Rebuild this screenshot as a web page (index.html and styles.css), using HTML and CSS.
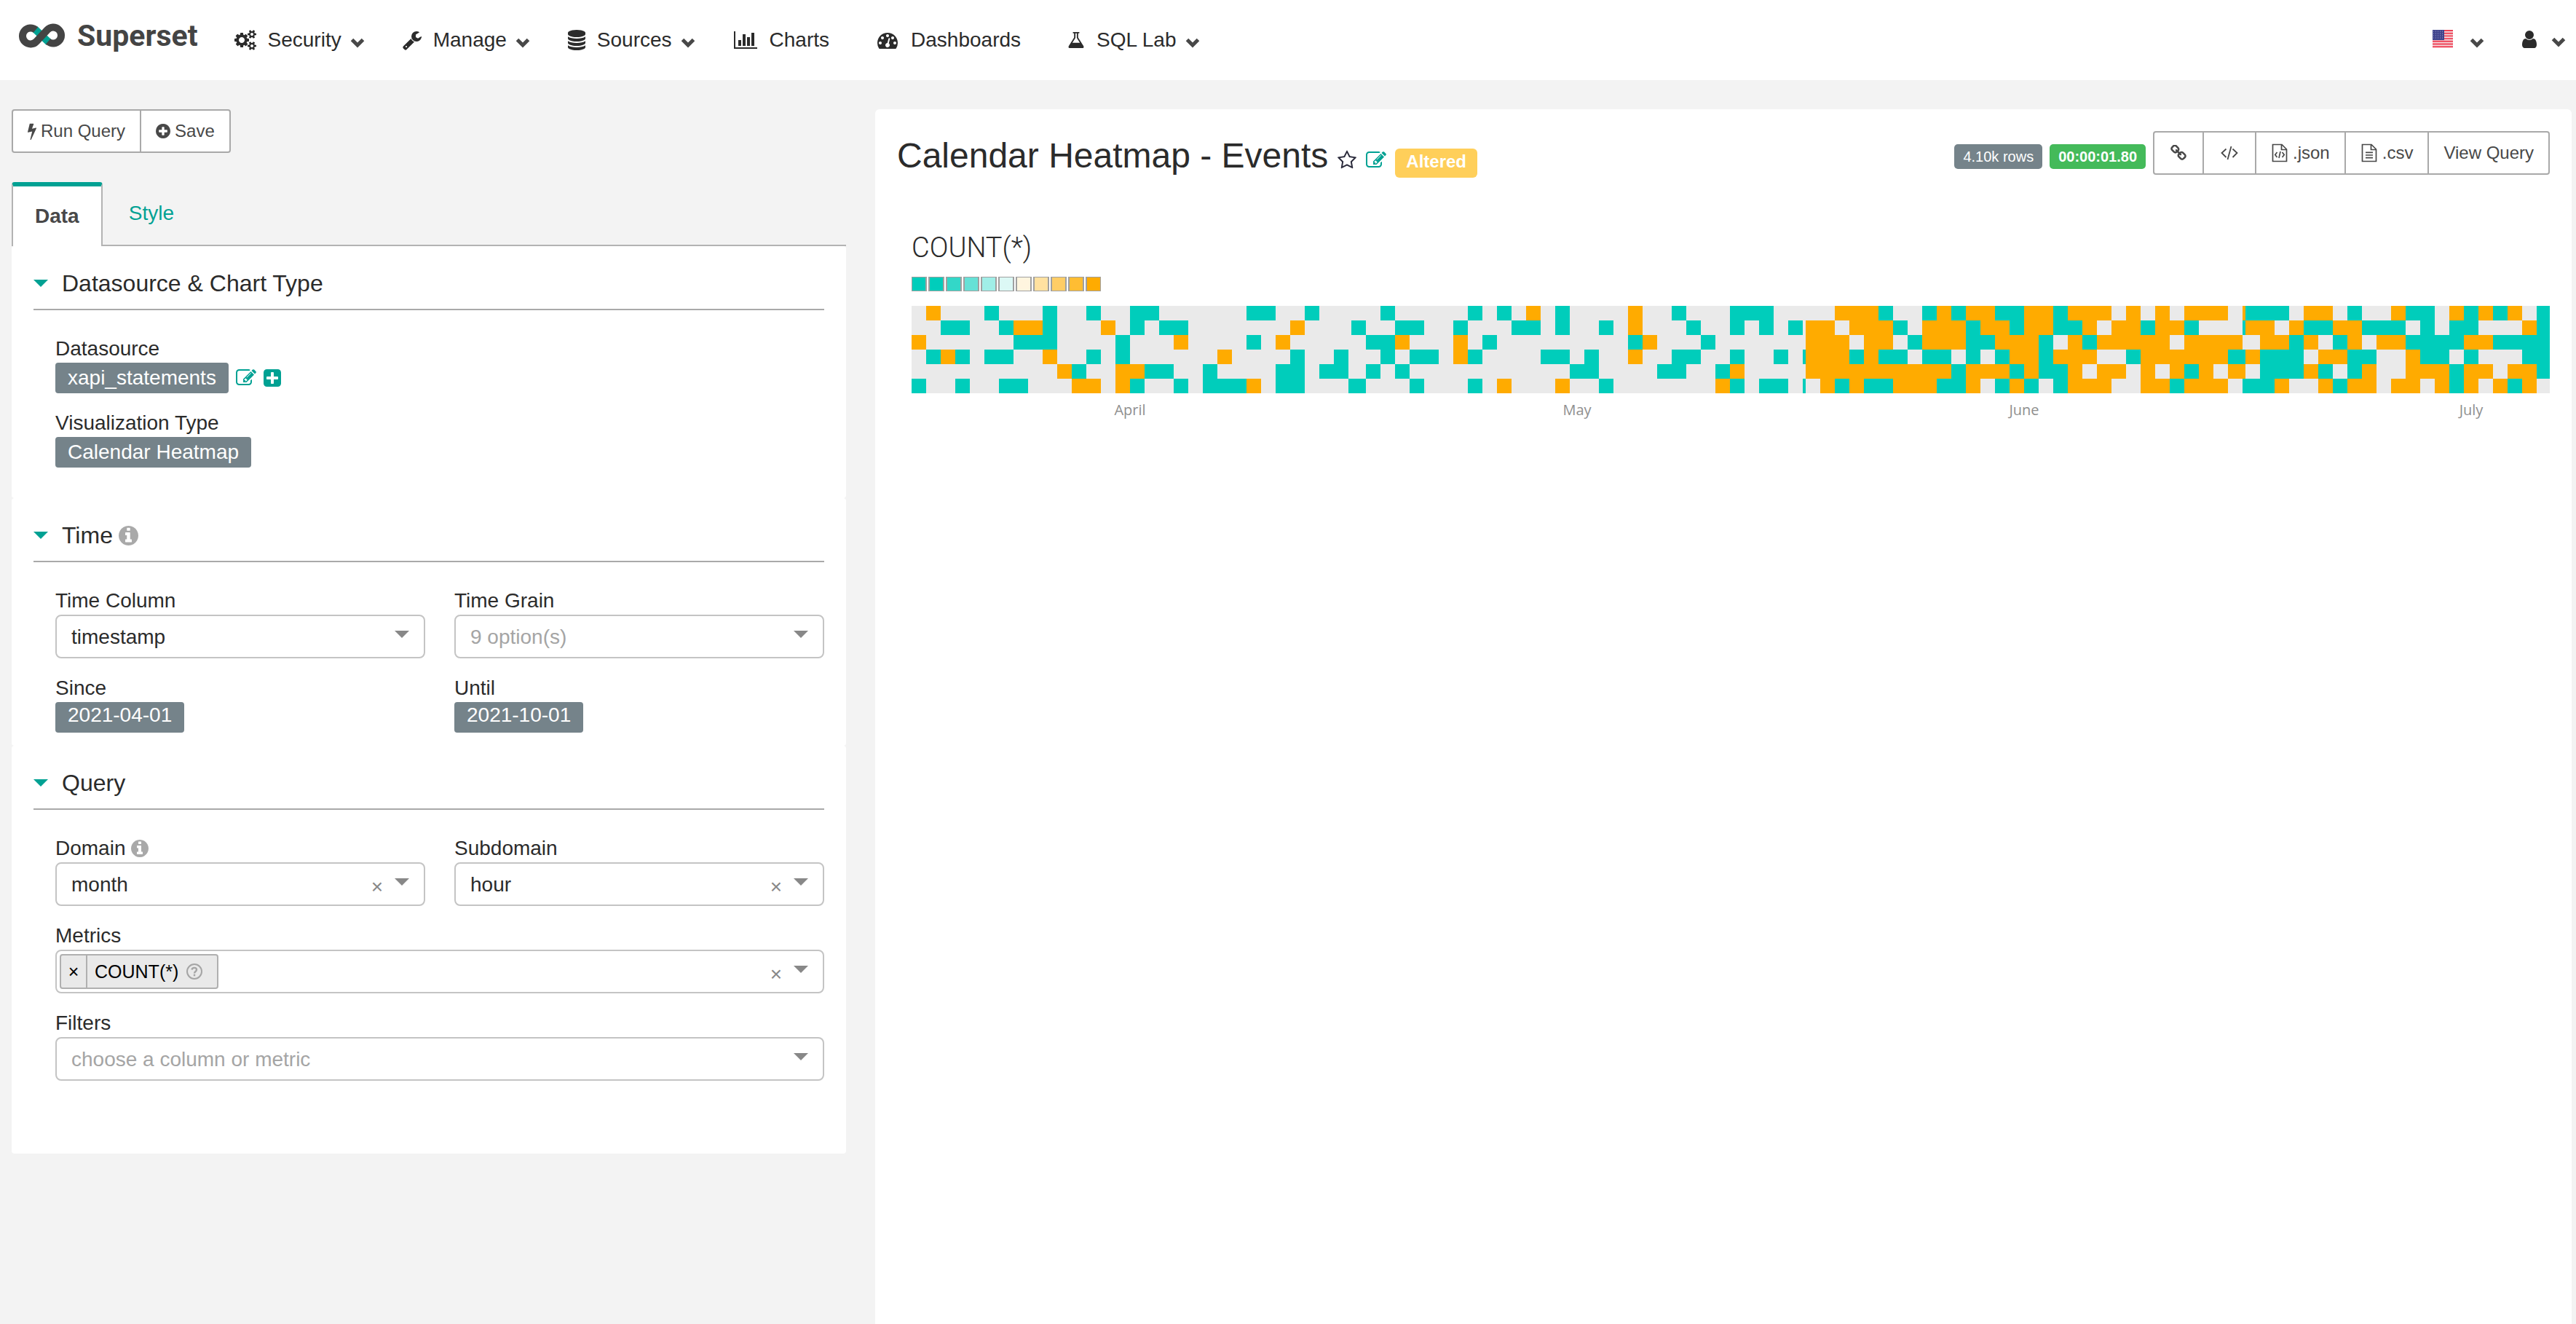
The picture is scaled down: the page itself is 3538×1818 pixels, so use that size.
FILE: index.html
```html
<!DOCTYPE html>
<html lang="en">
<head>
<meta charset="utf-8">
<meta name="viewport" content="width=device-width, initial-scale=1">
<title>Calendar Heatmap - Events</title>
<link rel="stylesheet" href="styles.css">
</head>
<body>
<svg class="sprite" aria-hidden="true">
  <symbol id="i-cogs" viewBox="0 0 1920 1792"><path d="M896 896q0-106-75-181t-181-75-181 75-75 181 75 181 181 75 181-75 75-181zm768 512q0-52-38-90t-90-38-90 38-38 90q0 53 37.5 90.5t90.5 37.5 90.5-37.5 37.5-90.5zm0-1024q0-52-38-90t-90-38-90 38-38 90q0 53 37.5 90.5t90.5 37.5 90.5-37.5 37.5-90.5zm-384 421v185q0 10-7 19.5t-16 10.5l-155 24q-11 35-32 76 34 48 90 115 7 11 7 20 0 12-7 19-23 30-82.5 89.5t-78.5 59.5q-11 0-21-7l-115-90q-37 19-77 31-11 108-23 155-7 24-30 24h-186q-11 0-20-7.5t-10-17.5l-23-153q-34-10-75-31l-118 89q-7 7-20 7-11 0-21-8-144-133-144-160 0-9 7-19 10-14 41-53t47-61q-23-44-35-82l-152-24q-10-1-17-9.5t-7-19.5v-185q0-10 7-19.5t16-10.5l155-24q11-35 32-76-34-48-90-115-7-11-7-20 0-12 7-20 22-30 82-89t79-59q11 0 21 7l115 90q34-18 77-32 11-108 23-154 7-24 30-24h186q11 0 20 7.5t10 17.5l23 153q34 10 75 31l118-89q8-7 20-7 11 0 21 8 144 133 144 160 0 8-7 19-12 16-42 54t-45 60q23 48 34 82l152 23q10 2 17 10.5t7 19.5zm640 533v140q0 16-149 31-12 27-30 52 51 113 51 138 0 4-4 7-122 71-124 71-8 0-46-47t-52-68q-20 2-30 2t-30-2q-14 21-52 68t-46 47q-2 0-124-71-4-3-4-7 0-25 51-138-18-25-30-52-149-15-149-31v-140q0-16 149-31 13-29 30-52-51-113-51-138 0-4 4-7 4-2 35-20t59-34 30-16q8 0 46 46.5t52 67.5q20-2 30-2t30 2q51-71 92-112l6-2q4 0 124 70 4 3 4 7 0 25-51 138 17 23 30 52 149 15 149 31zm0-1024v140q0 16-149 31-12 27-30 52 51 113 51 138 0 4-4 7-122 71-124 71-8 0-46-47t-52-68q-20 2-30 2t-30-2q-14 21-52 68t-46 47q-2 0-124-71-4-3-4-7 0-25 51-138-18-25-30-52-149-15-149-31v-140q0-16 149-31 13-29 30-52-51-113-51-138 0-4 4-7 4-2 35-20t59-34 30-16q8 0 46 46.5t52 67.5q20-2 30-2t30 2q51-71 92-112l6-2q4 0 124 70 4 3 4 7 0 25-51 138 17 23 30 52 149 15 149 31z"/></symbol>
  <symbol id="i-wrench" viewBox="64 0 1664 1792"><path d="M448 1472q0-26-19-45t-45-19-45 19-19 45 19 45 45 19 45-19 19-45zm644-420l-682 682q-37 37-90 37-52 0-91-37l-106-108q-38-36-38-90 0-53 38-91l681-681q39 98 114.5 173.5t173.5 114.5zm634-435q0 39-23 106-47 134-164.5 217.5t-258.5 83.5q-185 0-316.5-131.5t-131.5-316.5 131.5-316.5 316.5-131.5q58 0 121.5 16.5t107.5 46.5q16 11 16 28t-16 28l-293 169v224l193 107q5-3 79-48.5t135.5-81 70.5-35.5q15 0 23.5 10t8.5 25z"/></symbol>
  <symbol id="i-database" viewBox="128 0 1536 1792"><path d="M896 768q237 0 443-43t325-127v170q0 69-103 128t-280 93.5-385 34.5-385-34.5-280-93.5-103-128v-170q119 84 325 127t443 43zm0 768q237 0 443-43t325-127v170q0 69-103 128t-280 93.5-385 34.5-385-34.5-280-93.5-103-128v-170q119 84 325 127t443 43zm0-384q237 0 443-43t325-127v170q0 69-103 128t-280 93.5-385 34.5-385-34.5-280-93.5-103-128v-170q119 84 325 127t443 43zm0-1152q208 0 385 34.5t280 93.5 103 128v128q0 69-103 128t-280 93.5-385 34.5-385-34.5-280-93.5-103-128v-128q0-69 103-128t280-93.5 385-34.5z"/></symbol>
  <symbol id="i-chart" viewBox="0 0 2048 1792"><path d="M640 896v512h-256v-512h256zm384-512v1024h-256v-1024h256zm1024 1152v128h-2048v-1536h128v1408h1920zm-640-896v768h-256v-768h256zm384-384v1152h-256v-1152h256z"/></symbol>
  <symbol id="i-dashboard" viewBox="0 0 1792 1792"><path d="M384 1152q0-53-37.5-90.5t-90.5-37.5-90.5 37.5-37.5 90.5 37.5 90.5 90.5 37.5 90.5-37.5 37.5-90.5zm192-448q0-53-37.5-90.5t-90.5-37.5-90.5 37.5-37.5 90.5 37.5 90.5 90.5 37.5 90.5-37.5 37.5-90.5zm428 481l101-382q6-26-7.5-48.5t-38.5-29.5-48 6.5-30 39.5l-101 382q-60 5-107 43.5t-63 98.5q-20 77 20 146t117 89 146-20 89-117q16-60-6-117t-72-91zm660-33q0-53-37.5-90.5t-90.5-37.5-90.5 37.5-37.5 90.5 37.5 90.5 90.5 37.5 90.5-37.5 37.5-90.5zm-640-640q0-53-37.5-90.5t-90.5-37.5-90.5 37.5-37.5 90.5 37.5 90.5 90.5 37.5 90.5-37.5 37.5-90.5zm448 192q0-53-37.5-90.5t-90.5-37.5-90.5 37.5-37.5 90.5 37.5 90.5 90.5 37.5 90.5-37.5 37.5-90.5zm320 448q0 261-141 483-19 29-54 29h-1402q-35 0-54-29-141-221-141-483 0-182 71-348t191-286 286-191 348-71 348 71 286 191 191 286 71 348z"/></symbol>
  <symbol id="i-flask" viewBox="64 0 1664 1792"><path d="M1591 1448q56 89 21.5 152.5t-140.5 63.5h-1152q-106 0-140.5-63.5t21.5-152.5l503-793v-399h-64q-26 0-45-19t-19-45 19-45 45-19h512q26 0 45 19t19 45-19 45-45 19h-64v399zm-779-725l-272 429h712l-272-429-20-31v-436h-128v436z"/></symbol>
  <symbol id="i-user" viewBox="256 0 1280 1792"><path d="M1536 1399q0 109-62.5 187t-150.5 78h-854q-88 0-150.5-78t-62.5-187q0-85 8.5-160.5t31.5-152 58.5-131 94-89 134.5-34.5q131 128 313 128t313-128q76 0 134.5 34.5t94 89 58.5 131 31.5 152 8.5 160.5zm-256-887q0 159-112.5 271.5t-271.5 112.5-271.5-112.5-112.5-271.5 112.5-271.5 271.5-112.5 271.5 112.5 112.5 271.5z"/></symbol>
  <symbol id="i-bolt" viewBox="448 0 896 1792"><path d="M1333 566q18 20 7 44l-540 1157q-13 25-42 25-4 0-14-2-17-5-25.5-19t-4.5-30l197-808-406 101q-4 1-12 1-18 0-31-11-18-15-13-39l201-825q4-14 16-23t28-9h328q19 0 32 12.5t13 29.5q0 8-5 18l-171 463 396-98q8-2 12-2 19 0 34 15z"/></symbol>
  <symbol id="i-plus-circle" viewBox="128 0 1536 1792"><path d="M1344 960v-128q0-26-19-45t-45-19h-256v-256q0-26-19-45t-45-19h-128q-26 0-45 19t-19 45v256h-256q-26 0-45 19t-19 45v128q0 26 19 45t45 19h256v256q0 26 19 45t45 19h128q26 0 45-19t19-45v-256h256q26 0 45-19t19-45zm320-64q0 209-103 385.5t-279.5 279.5-385.5 103-385.5-103-279.5-279.5-103-385.5 103-385.5 279.5-279.5 385.5-103 385.5 103 279.5 279.5 103 385.5z"/></symbol>
  <symbol id="i-plus-square" viewBox="128 0 1536 1792"><path d="M1408 960v-128q0-26-19-45t-45-19h-320v-320q0-26-19-45t-45-19h-128q-26 0-45 19t-19 45v320h-320q-26 0-45 19t-19 45v128q0 26 19 45t45 19h320v320q0 26 19 45t45 19h128q26 0 45-19t19-45v-320h320q26 0 45-19t19-45zm256-544v960q0 119-84.5 203.5t-203.5 84.5h-960q-119 0-203.5-84.5t-84.5-203.5v-960q0-119 84.5-203.5t203.5-84.5h960q119 0 203.5 84.5t84.5 203.5z"/></symbol>
  <symbol id="i-edit" viewBox="0 0 1792 1792"><path d="M888 1184l116-116-152-152-116 116v56h96v96h56zm440-720q-16-16-33 1l-350 350q-17 17-1 33t33-1l350-350q17-17 1-33zm80 594v190q0 119-84.5 203.5t-203.5 84.5h-832q-119 0-203.5-84.5t-84.5-203.5v-832q0-119 84.5-203.5t203.5-84.5h832q63 0 117 25 15 7 18 23 3 17-9 29l-49 49q-14 14-32 8-23-6-45-6h-832q-66 0-113 47t-47 113v832q0 66 47 113t113 47h832q66 0 113-47t47-113v-126q0-13 9-22l64-64q15-15 35-7t20 29zm-96-738l288 288-672 672h-288v-288zm444 132l-92 92-288-288 92-92q28-28 68-28t68 28l152 152q28 28 28 68t-28 68z"/></symbol>
  <symbol id="i-star" viewBox="0 0 1792 1792"><path d="M1201 1004l306-297-422-62-189-382-189 382-422 62 306 297-73 421 378-199 377 199zm527-357q0 22-26 48l-363 354 86 500q1 7 1 20 0 50-41 50-19 0-40-12l-449-236-449 236q-22 12-40 12-21 0-31.5-14.5t-10.5-35.5q0-6 2-20l86-500-364-354q-25-27-25-48 0-37 56-46l502-73 225-455q19-41 49-41t49 41l225 455 502 73q56 9 56 46z"/></symbol>
  <symbol id="i-info" viewBox="128 128 1536 1536"><path d="M1152 1376v-160q0-14-9-23t-23-9h-96v-512q0-14-9-23t-23-9h-320q-14 0-23 9t-9 23v160q0 14 9 23t23 9h96v320h-96q-14 0-23 9t-9 23v160q0 14 9 23t23 9h448q14 0 23-9t9-23zm-128-896v-160q0-14-9-23t-23-9h-192q-14 0-23 9t-9 23v160q0 14 9 23t23 9h192q14 0 23-9t9-23zm640 416q0 209-103 385.5t-279.5 279.5-385.5 103-385.5-103-279.5-279.5-103-385.5 103-385.5 279.5-279.5 385.5-103 385.5 103 279.5 279.5 103 385.5z"/></symbol>
  <symbol id="i-question" viewBox="0 0 22 22"><g fill="none" stroke="currentColor" stroke-width="2"><circle cx="11" cy="11" r="10"/><path d="M7.500 8.500C8 5 14 5 14 8.500C14 11 11 11 11 13.500" stroke-width="2.400"/></g><path d="M9.800 14.800h2.400v2.400h-2.400z"/></symbol>
  <symbol id="i-link" viewBox="64 64 1664 1664"><path d="M1520 1216q0-40-28-68l-208-208q-28-28-68-28-42 0-72 32 3 3 19 18.5t21.5 21.5 15 19 13 25.5 3.5 27.5q0 40-28 68t-68 28q-15 0-27.5-3.500t-25.5-13-19-15-21.5-21.5-18.500-19q-33 31-33 73 0 40 28 68l206 207q27 27 68 27 40 0 68-26l147-146q28-28 28-67zm-703-705q0-40-28-68l-206-207q-28-28-68-28-39 0-68 27l-147 146q-28 28-28 67 0 40 28 68l208 208q27 27 68 27 42 0 72-31-3-3-19-18.500t-21.500-21.500-15-19-13-25.500-3.500-27.500q0-40 28-68t68-28q15 0 27.500 3.500t25.500 13 19 15 21.500 21.500 18.500 19q33-31 33-73zm895 705q0 120-85 203l-147 146q-83 83-203 83-121 0-204-85l-206-207q-83-83-83-203 0-123 88-209l-88-88q-86 88-208 88-120 0-204-84l-208-208q-84-84-84-204t85-203l147-146q83-83 203-83 121 0 204 85l206 207q83 83 83 203 0 123-88 209l88 88q86-88 208-88 120 0 204 84l208 208q84 84 84 204z"/></symbol>
  <symbol id="i-code" viewBox="0 0 26 22"><path d="M8.500 5.500L2.500 11L8.500 17M17.500 5.500L23.500 11L17.500 17M15.500 2L10.500 20" fill="none" stroke="currentColor" stroke-width="1.800"/></symbol>
  <symbol id="i-file-code" viewBox="0 0 22 26"><path d="M1.500 1.500H14L20.500 8V24.500H1.500ZM13.500 1.500V8.500H20.500M7.500 12L4.800 15.500L7.500 19M14.500 12L17.200 15.500L14.500 19M12 11L10 20" fill="none" stroke="currentColor" stroke-width="1.700"/></symbol>
  <symbol id="i-file-text" viewBox="0 0 22 26"><path d="M1.500 1.500H14L20.500 8V24.500H1.500ZM13.500 1.500V8.500H20.500M6 12.300H16M6 16H16M6 19.700H16" fill="none" stroke="currentColor" stroke-width="1.700"/></symbol>
  <symbol id="i-chevron" viewBox="0 0 20 14"><path d="M2.500 2.500L10 10L17.500 2.500" fill="none" stroke="currentColor" stroke-width="5"/></symbol>
  <symbol id="i-down" viewBox="0 0 20 10"><path d="M0 0H20L10 10Z"/></symbol>
</svg>

<nav class="navbar">
  <a class="brand" href="#">
    <svg class="logo" viewBox="0 0 64 34" aria-hidden="true">
      <path class="logo-under" d="M22 8L41 26"/>
      <path class="logo-loop" d="M23 9A11 11 0 1 0 24 25L39 9A11 11 0 1 1 40 25"/>
    </svg>
    <span>Superset</span>
  </a>
  <ul class="menu">
    <li><a class="menu-link" href="#"><svg class="icon w30"><use href="#i-cogs"/></svg>Security<svg class="chevron"><use href="#i-chevron"/></svg></a></li>
    <li><a class="menu-link" href="#"><svg class="icon w26"><use href="#i-wrench"/></svg>Manage<svg class="chevron"><use href="#i-chevron"/></svg></a></li>
    <li><a class="menu-link" href="#"><svg class="icon w24"><use href="#i-database"/></svg>Sources<svg class="chevron"><use href="#i-chevron"/></svg></a></li>
    <li><a class="menu-link plain" href="#"><svg class="icon w34"><use href="#i-chart"/></svg>Charts</a></li>
    <li><a class="menu-link plain" href="#"><svg class="icon w32"><use href="#i-dashboard"/></svg>Dashboards</a></li>
    <li><a class="menu-link" href="#"><svg class="icon w24"><use href="#i-flask"/></svg>SQL Lab<svg class="chevron"><use href="#i-chevron"/></svg></a></li>
  </ul>
  <ul class="menu menu-right">
    <li><a class="menu-link" href="#" aria-label="Language">
      <svg class="flag" viewBox="0 0 30 26" aria-hidden="true">
        <rect x="1" y="1" width="28" height="24" rx="1" fill="#f4d9dc"/>
        <path d="M1 2H29M1 5.700H29M1 9.400H29M1 13.100H29M1 16.800H29M1 20.500H29M1 24.200H29" stroke="#ee4155" stroke-width="1.900"/>
        <rect x="1" y="1" width="16" height="14" fill="#40448c"/>
        <path d="M2 3H17M2 6H17M2 9H17M2 12H17" stroke="#9fa3cf" stroke-width="1" stroke-dasharray="1 2"/>
      </svg>
      <svg class="chevron"><use href="#i-chevron"/></svg></a></li>
    <li><a class="menu-link" href="#" aria-label="Account"><svg class="icon w20"><use href="#i-user"/></svg><svg class="chevron"><use href="#i-chevron"/></svg></a></li>
  </ul>
</nav>

<main class="explore">
  <div class="controls">
    <div class="btn-group">
      <button class="btn" type="button"><svg class="btn-icon w12"><use href="#i-bolt"/></svg>Run Query</button>
      <button class="btn" type="button"><svg class="btn-icon w20"><use href="#i-plus-circle"/></svg>Save</button>
    </div>

    <div class="tabs" role="tablist">
      <button class="tab active" type="button" role="tab" aria-selected="true">Data</button>
      <button class="tab" type="button" role="tab" aria-selected="false">Style</button>
    </div>

    <section class="section section-source">
      <h2 class="section-title"><svg class="down"><use href="#i-down"/></svg>Datasource &amp; Chart Type</h2>
      <div class="section-body">
        <div class="control wide">
          <span class="label">Datasource</span>
          <div class="tag-row">
            <button class="tag" type="button">xapi_statements</button>
            <a class="tag-action" href="#" aria-label="Edit datasource"><svg class="w28"><use href="#i-edit"/></svg></a>
            <a class="tag-action" href="#" aria-label="Add"><svg class="w24"><use href="#i-plus-square"/></svg></a>
          </div>
        </div>
        <div class="control wide">
          <span class="label">Visualization Type</span>
          <div class="tag-row"><button class="tag" type="button">Calendar Heatmap</button></div>
        </div>
      </div>
    </section>

    <section class="section section-time">
      <h2 class="section-title"><svg class="down"><use href="#i-down"/></svg>Time<svg class="info big"><use href="#i-info"/></svg></h2>
      <div class="section-body">
        <div class="control">
          <label class="label" for="time-column">Time Column</label>
          <div class="select">
            <select id="time-column"><option>timestamp</option></select>
            <svg class="arrow"><use href="#i-down"/></svg>
          </div>
        </div>
        <div class="control">
          <label class="label" for="time-grain">Time Grain</label>
          <div class="select">
            <select id="time-grain" class="empty"><option>9 option(s)</option></select>
            <svg class="arrow"><use href="#i-down"/></svg>
          </div>
        </div>
        <div class="control">
          <span class="label">Since</span>
          <div class="tag-row"><button class="tag date" type="button">2021-04-01</button></div>
        </div>
        <div class="control">
          <span class="label">Until</span>
          <div class="tag-row"><button class="tag date" type="button">2021-10-01</button></div>
        </div>
      </div>
    </section>

    <section class="section section-query">
      <h2 class="section-title"><svg class="down"><use href="#i-down"/></svg>Query</h2>
      <div class="section-body">
        <div class="control">
          <label class="label" for="domain">Domain<svg class="info"><use href="#i-info"/></svg></label>
          <div class="select">
            <select id="domain"><option>month</option></select>
            <button class="clear" type="button" aria-label="Clear domain">×</button>
            <svg class="arrow"><use href="#i-down"/></svg>
          </div>
        </div>
        <div class="control">
          <label class="label" for="subdomain">Subdomain</label>
          <div class="select">
            <select id="subdomain"><option>hour</option></select>
            <button class="clear" type="button" aria-label="Clear subdomain">×</button>
            <svg class="arrow"><use href="#i-down"/></svg>
          </div>
        </div>
        <div class="control wide">
          <label class="label" for="metrics">Metrics</label>
          <div class="select">
            <span class="chip"><button class="chip-remove" type="button" aria-label="Remove metric">×</button><span class="chip-text">COUNT(*)<svg class="help"><use href="#i-question"/></svg></span></span>
            <input id="metrics" type="text">
            <button class="clear" type="button" aria-label="Clear metrics">×</button>
            <svg class="arrow"><use href="#i-down"/></svg>
          </div>
        </div>
        <div class="control wide">
          <label class="label" for="filters">Filters</label>
          <div class="select">
            <select id="filters" class="empty"><option>choose a column or metric</option></select>
            <svg class="arrow"><use href="#i-down"/></svg>
          </div>
        </div>
      </div>
    </section>
  </div>

  <section class="chart">
    <header class="chart-header">
      <div class="chart-title">
        <h1>Calendar Heatmap - Events</h1>
        <button class="title-action star" type="button" aria-label="Favorite"><svg class="title-icon"><use href="#i-star"/></svg></button>
        <a class="title-action" href="#" aria-label="Edit chart"><svg class="title-icon"><use href="#i-edit"/></svg></a>
        <span class="altered">Altered</span>
      </div>
      <div class="chart-tools">
        <div class="badges">
          <span class="badge">4.10k rows</span>
          <span class="badge timer">00:00:01.80</span>
        </div>
        <div class="btn-group">
          <button class="btn" type="button" aria-label="Short link"><svg class="w26 h22"><use href="#i-link"/></svg></button>
          <button class="btn" type="button" aria-label="Embed code"><svg class="w30 h22"><use href="#i-code"/></svg></button>
          <a class="btn" href="#"><svg class="w24 h26"><use href="#i-file-code"/></svg>.json</a>
          <a class="btn" href="#"><svg class="w24 h26"><use href="#i-file-text"/></svg>.csv</a>
          <button class="btn" type="button">View Query</button>
        </div>
      </div>
    </header>
    <div class="chart-body">
      <div class="metric">COUNT(*)</div>
      <svg class="legend" id="legend" aria-hidden="true"></svg>
      <svg class="heatmap" id="heatmap" role="img" aria-label="Hourly counts by month"></svg>
    </div>
  </section>
</main>
<script src="heatmap.js"></script>
</body>
</html>
```
FILE: styles.css
```css
* { box-sizing: border-box; }

body {
  margin: 0;
  background: #f3f3f3;
  color: #2b2b2b;
  font: 28px/40px "Liberation Sans", Arial, Helvetica, sans-serif;
}

a { color: inherit; text-decoration: none; }

button, select, input {
  margin: 0;
  padding: 0;
  border: 0;
  background: none;
  color: inherit;
  font: inherit;
}

svg { display: block; flex: none; fill: currentColor; }
.sprite { position: absolute; width: 0; height: 0; }

.w12 { width: 12px; }
.w20 { width: 20px; }
.w24 { width: 24px; }
.w26 { width: 26px; }
.w28 { width: 28px; }
.w30 { width: 30px; }
.w32 { width: 32px; }
.w34 { width: 34px; }
.h22 { height: 22px; }
.h26 { height: 26px; }

/* Top bar */
.navbar {
  display: flex;
  align-items: center;
  height: 110px;
  padding: 0 14px 0 26px;
  background: #fff;
}
.brand {
  display: flex;
  align-items: center;
  gap: 16px;
  margin-right: 50px;
  padding-bottom: 12px;
  color: #444;
  font-family: Roboto, "Liberation Sans", sans-serif;
  font-size: 41px;
  font-weight: bold;
}
.logo { width: 64px; height: 34px; fill: none; stroke-width: 10px; }
.logo-under { stroke: #00a193; }
.logo-loop { stroke: #444; }
.menu {
  display: flex;
  gap: 52px;
  margin: 0;
  padding: 0;
  list-style: none;
}
.menu-right { margin-left: auto; }
.menu-link { display: flex; align-items: center; color: #2b2b2b; }
.menu-link.plain { padding-right: 12px; }
.icon { height: 28px; margin-right: 16px; }
.menu-right .icon { margin-right: 8px; }
.chevron { width: 20px; height: 14px; margin: 8px 0 0 12px; color: #484848; }
.flag { width: 30px; height: 26px; margin: 0 10px 4px 0; }

/* Page columns */
.explore {
  display: grid;
  grid-template-columns: 1146fr 2330fr;
  align-items: start;
  gap: 40px;
  padding: 40px 6px 0 16px;
}

/* Buttons */
.btn-group { display: flex; }
.btn {
  display: flex;
  align-items: center;
  gap: 6px;
  height: 60px;
  padding: 0 20px;
  border: 2px solid #a9a9a9;
  background: #fff;
  color: #484848;
  font-size: 24px;
  line-height: 28px;
}
.btn + .btn { margin-left: -2px; }
.btn:first-child { border-radius: 4px 0 0 4px; }
.btn:last-child { border-radius: 0 4px 4px 0; }
.btn-icon { height: 24px; }

/* Tabs */
.tabs {
  display: flex;
  gap: 4px;
  height: 88px;
  margin-top: 40px;
  border-bottom: 2px solid #b3b3b3;
}
.tab {
  height: 88px;
  padding: 0 32px 3px;
  color: #00a193;
}
.tab.active {
  padding: 0 30px;
  border: 2px solid #b3b3b3;
  border-top: 6px solid #00a193;
  border-bottom: 0;
  border-radius: 4px 4px 0 0;
  background: #fff;
  color: #484848;
  font-weight: bold;
}

/* Control sections */
.section {
  padding: 0 30px;
  border-radius: 4px;
  background: #fff;
}
.section-source { padding-bottom: 42px; }
.section-time { padding-bottom: 18px; }
.section-query { padding-bottom: 100px; }
.section-title {
  display: flex;
  align-items: center;
  margin: 0;
  padding: 32px 0 16px;
  border-bottom: 2px solid #a9a9a9;
  font-size: 32px;
  font-weight: normal;
  line-height: 38px;
}
.down { width: 20px; height: 10px; margin-right: 19px; color: #00a193; }
.info { width: 24px; height: 24px; margin-left: 8px; color: #a9a9a9; }
.info.big { width: 27px; height: 27px; }
.section-body {
  display: grid;
  grid-template-columns: 1fr 1fr;
  gap: 20px 40px;
  padding: 32px 0 0 30px;
}
.wide { grid-column: 1 / -1; }
.label { display: flex; align-items: center; height: 40px; padding-top: 2px; }
.tag-row { display: flex; align-items: center; gap: 10px; }
.tag {
  height: 42px;
  padding: 0 17px;
  border-radius: 4px;
  background: #75838a;
  color: #fff;
  line-height: 42px;
}
.tag.date { padding-bottom: 6px; line-height: 36px; }
.tag-action { color: #00a193; }
.tag-action svg { height: 28px; }

.select {
  display: flex;
  align-items: center;
  height: 60px;
  padding-right: 20px;
  border: 2px solid #c4c4c4;
  border-radius: 8px;
  background: #fff;
}
.select select {
  flex: 1;
  min-width: 0;
  height: 56px;
  padding: 2px 0 0 20px;
  appearance: none;
}
.select select.empty { color: #a5a5a5; }
.select input { flex: 1; min-width: 0; height: 56px; }
.clear { height: 40px; padding: 8px 16px 0 0; color: #888; line-height: 32px; }
.arrow { width: 20px; height: 10px; margin-bottom: 6px; color: #888; }

.chip {
  display: flex;
  height: 48px;
  margin-left: 4px;
  border: 2px solid #b0b0b0;
  border-radius: 4px;
  background: #e9e9e9;
  color: #000;
  font-size: 25px;
  line-height: 40px;
}
.chip-remove { width: 36px; border-right: 2px solid #b0b0b0; }
.chip-text { display: flex; align-items: center; gap: 11px; padding: 0 20px 0 10px; }
.help { width: 22px; height: 22px; color: #a5a5a5; }

/* Chart panel */
.chart {
  min-height: calc(100vh - 150px);
  padding: 30px 30px 40px;
  border-radius: 6px 6px 0 0;
  background: #fff;
}
.chart-header { display: flex; justify-content: space-between; }
.chart-title { display: flex; align-items: baseline; gap: 12px; }
.chart-title h1 {
  margin: 0;
  font-size: 48px;
  font-weight: normal;
  line-height: 68px;
}
.title-action { height: 28px; color: #00a193; line-height: 28px; }
.title-action.star { color: #2b2b3b; }
.title-icon { display: inline-block; width: 28px; height: 28px; vertical-align: -4px; }
.altered {
  height: 40px;
  padding: 0 15px 4px;
  border-radius: 6px;
  background: #ffcf5a;
  color: #fff;
  font-size: 24px;
  font-weight: bold;
  line-height: 36px;
}
.chart-tools { display: flex; align-items: center; gap: 10px; height: 60px; }
.badges { display: flex; gap: 10px; padding-top: 10px; }
.badge {
  padding: 0 12px;
  border-radius: 5px;
  background: #75838a;
  color: #fff;
  font-size: 20px;
  line-height: 34px;
}
.timer { background: #44ba5a; font-weight: bold; }

.chart-body { padding: 66px 0 0 20px; }
.metric {
  font-family: Roboto, "Liberation Sans", sans-serif;
  font-size: 38px;
  font-weight: 300;
  line-height: 52px;
}
.legend { width: 260px; height: 20px; margin-top: 14px; }
.heatmap { width: 100%; height: 170px; margin-top: 20px; }
.month {
  fill: #8f8f8f;
  font-family: "Open Sans", "Noto Sans", sans-serif;
  font-size: 20px;
  text-anchor: middle;
}
```
FILE: heatmap.js
```js
const NS = 'http://www.w3.org/2000/svg';
const CELL = 20;
const COLORS = { t: '#00cdbb', o: '#ffab00' };
const SCALE = ['#00cdbb', '#00cdbb', '#33d7c8', '#66e1d6', '#a0eee7', '#dcf8f5',
  '#fff5df', '#ffe1a0', '#ffcd66', '#ffbd33', '#ffab00'];

// Each row lists runs of filled columns: t = low, o = high.
const MONTHS = [
  { name: 'April', x: 0, width: 604, label: 300, rows: [
    'o1 t5 t9 t12 t15-16 t23-24 t27',
    't2-3 t6 o7-8 t9 o13 t15 t17-18 o26',
    'o0 t7-9 t14 o18 t23 o25',
    't1 o2 t3 t5-6 o9 t12 t14 o21 t26 t29',
    'o10 t11 o14-15 t16-17 t20 t25-26 t28-29',
    't0 t3 t6-7 o11-12 o14 t15 t18 t20-22 o23 t25-26 t30'] },
  { name: 'May', x: 604, width: 624, label: 914, rows: [
    't2 t8 t10 o12 t14 o19 t22 t26-28',
    't0 t3-4 t7 t11-12 t14 t17 o19 t23 t26 t28 t30',
    't1-2 o3 o7 t9 t19 o20 t24',
    't2 t4-5 o7 t8 t13-14 t16 o19 t22-23 t26 t29 t31',
    't1 t3 t15-16 t21-22 t25 o26',
    't0 t4 t8 o10 o14 t17 o25 t26 t28-29 t31'] },
  { name: 'June', x: 1228, width: 604, label: 1528, rows: [
    'o2-4 t5 t8 o9 t10 o11-12 t13-14 o15-16 t17 o18-20 o22 o24 o26-28 o30',
    'o0-1 o3-5 t6 o8-10 t11 o12-13 t14 o15-16 t17-18 o19 o21-22 t23 o24-25 t26 t30',
    'o0-2 o4-5 t7 o8-10 t11-12 o13-15 t16 o18 t19 o20-24 o26-29',
    'o0-2 t3 o4 t5-6 t8-9 t11 t13 o14-15 t16 o17-19 t22 o23-28 t29-30',
    'o0-9 t10 o11-13 t14 o15 t16-17 o18 o20-21 o23 o25 t26 o27 o29-30',
    'o1 t2 o3 t4-5 o6-8 t9-10 o11 t13 o14 t15 t17 o18-20 o23-24 t25 o26-28 t30'] },
  { name: 'July', x: 1832, width: 418, label: 2142, rows: [
    't0-2 o4-5 t7 o10 t11-12 o14 t15 o16 t17 o18 t20',
    'o0-1 o3 t4-5 o6-7 t8-10 t12 t14-15 o19 t20',
    'o1-2 t3 o4 t6 o7 o9-10 t11-14 o15-16 t17-20',
    'o0 t1-3 o5-6 t7-8 o11 t12-13 t15 t19-20',
    't1-3 o4 t5 t7 o8 o11-13 t14 o15-16 o18-19 t20',
    't0-1 o2 o5 t6 o7-8 o10-11 o13 t14 o15 o17 t18 o19'] },
];

function add(parent, tag, attrs) {
  const node = document.createElementNS(NS, tag);
  for (const key in attrs) node.setAttribute(key, attrs[key]);
  parent.appendChild(node);
  return node;
}

const legend = document.getElementById('legend');
SCALE.forEach((fill, i) => {
  add(legend, 'rect', { x: i * 24, y: 0, width: 20, height: 20, fill, stroke: '#a0a0a0', 'stroke-width': 2 });
});

const map = document.getElementById('heatmap');
MONTHS.forEach((month) => {
  add(map, 'rect', { x: month.x, y: 0, width: month.width, height: 6 * CELL, fill: '#eaeaea' });
  month.rows.forEach((row, r) => {
    row.split(' ').forEach((run) => {
      const [from, to = from] = run.slice(1).split('-').map(Number);
      const left = from * CELL;
      const right = Math.min((to + 1) * CELL, month.width);
      add(map, 'rect', { x: month.x + left, y: r * CELL, width: right - left, height: CELL, fill: COLORS[run[0]] });
    });
  });
  add(map, 'text', { x: month.label, y: 150, class: 'month' }).textContent = month.name;
});
```
